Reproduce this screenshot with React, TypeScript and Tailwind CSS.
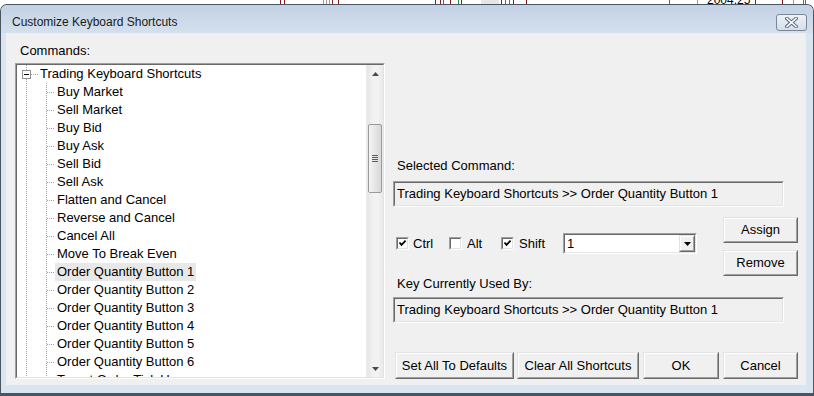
import React from "react";

const vdots =
  "bg-[image:repeating-linear-gradient(to_bottom,#a0a0a0_0px,#a0a0a0_1px,transparent_1px,transparent_2px)]";
const hdots =
  "bg-[image:repeating-linear-gradient(to_right,#a0a0a0_0px,#a0a0a0_1px,transparent_1px,transparent_2px)]";

const children = [
  "Buy Market",
  "Sell Market",
  "Buy Bid",
  "Buy Ask",
  "Sell Bid",
  "Sell Ask",
  "Flatten and Cancel",
  "Reverse and Cancel",
  "Cancel All",
  "Move To Break Even",
  "Order Quantity Button 1",
  "Order Quantity Button 2",
  "Order Quantity Button 3",
  "Order Quantity Button 4",
  "Order Quantity Button 5",
  "Order Quantity Button 6",
  "Target Order Tick Up",
];

function Sunken({
  children,
  className = "",
  inner = "",
}: {
  children?: React.ReactNode;
  className?: string;
  inner?: string;
}) {
  return (
    <div
      className={`border border-t-[#a0a0a0] border-l-[#a0a0a0] border-r-white border-b-white ${className}`}
    >
      <div
        className={`w-full h-full border border-t-[#696969] border-l-[#696969] border-r-[#e3e3e3] border-b-[#e3e3e3] ${inner}`}
      >
        {children}
      </div>
    </div>
  );
}

function Btn({ label, className = "" }: { label: string; className?: string }) {
  return (
    <div
      className={`border border-t-[#e3e3e3] border-l-[#e3e3e3] border-r-[#696969] border-b-[#696969] ${className}`}
    >
      <div className="h-full border border-t-white border-l-white border-r-[#a0a0a0] border-b-[#a0a0a0] bg-[#f0f0f0] flex items-center justify-center text-[13px] text-black">
        {label}
      </div>
    </div>
  );
}

function Check({ checked }: { checked: boolean }) {
  return (
    <div className="w-[13px] h-[13px] border border-t-[#a0a0a0] border-l-[#a0a0a0] border-r-white border-b-white shrink-0">
      <div className="w-full h-full border border-t-[#696969] border-l-[#696969] border-r-[#e3e3e3] border-b-[#e3e3e3] bg-white flex items-center justify-center">
        {checked && (
          <svg width="9" height="9" viewBox="0 0 9 9">
            <path d="M1.5 3.5 L3.5 5.8 L7.6 1.6" stroke="#000" strokeWidth="1.8" fill="none" />
          </svg>
        )}
      </div>
    </div>
  );
}

function ChartStrip() {
  const lines: [number, string][] = [
    [280, "#8b1a1a"],
    [284, "#8b1a1a"],
    [323, "#9a9a9a"],
    [326, "#9a9a9a"],
    [329, "#9a9a9a"],
    [332, "#8b1a1a"],
    [338, "#8b1a1a"],
    [435, "#8b1a1a"],
    [440, "#8b1a1a"],
    [443, "#2e8b2e"],
    [450, "#8b1a1a"],
    [458, "#2e8b2e"],
    [461, "#8b1a1a"],
    [501, "#8b1a1a"],
    [505, "#2e8b2e"],
    [509, "#2e8b2e"],
    [513, "#8b1a1a"],
    [526, "#8b1a1a"],
    [669, "#2e8b2e"],
    [697, "#9a9a9a"],
    [755, "#8b1a1a"],
    [782, "#8b1a1a"],
    [793, "#9a9a9a"],
    [803, "#2e8b2e"],
    [805, "#2e8b2e"],
  ];
  return (
    <svg width="814" height="4" className="block">
      <rect x="0" y="0" width="814" height="4" fill="#ffffff" />
      <rect x="481" y="0" width="18" height="4" fill="#e6e6e6" />
      {lines.map(([x, c], i) => (
        <rect key={i} x={x} y="0" width="1" height="4" fill={c} />
      ))}
      <text x="707" y="4" fontSize="12" fontFamily="Liberation Sans, Arial, sans-serif" fill="#000">
        2004.25
      </text>
    </svg>
  );
}

function Tree() {
  return (
    <div className="flex-1 bg-white overflow-hidden">
      <div className="flex flex-col">
        {/* root */}
        <div className="flex h-[18px]">
          <div className="w-[5px]" />
          <div className="w-[9px] flex flex-col items-center">
            <div className={`w-px flex-1 ${vdots}`} />
            <div className="w-[9px] h-[9px] border border-[#919191] bg-white flex items-center justify-center">
              <div className="w-[5px] h-px bg-black" />
            </div>
            <div className={`w-px flex-1 ${vdots}`} />
          </div>
          <div className="w-[7px] flex items-center">
            <div className={`h-px w-full ${hdots}`} />
          </div>
          <div className="pl-[2px] flex items-center text-[13px] leading-[18px] text-black whitespace-nowrap">
            Trading Keyboard Shortcuts
          </div>
        </div>
        {children.map((c, i) => (
          <div key={i} className="flex h-[18px]">
            <div className="w-[9px]" />
            <div className={`w-px h-full ${vdots}`} />
            <div className="w-[19px]" />
            <div className={`w-px h-full ${vdots}`} />
            <div className="w-[8px] flex items-center">
              <div className={`h-px w-full ${hdots}`} />
            </div>
            <div
              className={`px-[2px] flex items-center text-[13px] leading-[18px] text-black whitespace-nowrap ${
                i === 10 ? "bg-[#e8e8e8]" : ""
              }`}
            >
              {c}
            </div>
          </div>
        ))}
      </div>
    </div>
  );
}

function ScrollBar() {
  return (
    <div className="w-[17px] h-full flex flex-col bg-[linear-gradient(to_right,#e6e6e6,#f2f2f2_40%,#f2f2f2_70%,#e9e9e9)] border-l border-[#ececec]">
      <div className="h-[17px] flex items-center justify-center">
        <svg width="7" height="4" viewBox="0 0 7 4">
          <path d="M0 4 L3.5 0 L7 4 Z" fill="#4a4a4a" />
        </svg>
      </div>
      <div className="h-[42px]" />
      <div className="mx-[1px] h-[69px] rounded-[2px] border border-[#9a9a9a] bg-[linear-gradient(to_right,#f4f4f4,#e6e6e6_50%,#d8d8d8)] flex flex-col items-center justify-center gap-[1px]">
        <div className="w-[6px] h-px bg-[#5e5e5e]" />
        <div className="w-[6px] h-px bg-[#5e5e5e]" />
        <div className="w-[6px] h-px bg-[#5e5e5e]" />
        <div className="w-[6px] h-px bg-[#5e5e5e]" />
      </div>
      <div className="flex-1" />
      <div className="h-[17px] flex items-center justify-center">
        <svg width="7" height="4" viewBox="0 0 7 4">
          <path d="M0 0 L3.5 4 L7 0 Z" fill="#4a4a4a" />
        </svg>
      </div>
    </div>
  );
}

export default function App() {
  return (
    <div className="w-[814px] h-[396px] bg-white overflow-hidden font-['Liberation_Sans',Arial,sans-serif] text-black">
      <ChartStrip />
      <div className="w-[814px] h-[392px] rounded-t-[7px] border-x border-t border-b-[3px] border-[#4a5561] bg-[#d9e5f1] flex flex-col overflow-hidden">
        {/* title bar */}
        <div className="h-[28px] shrink-0 flex items-end justify-between pl-[11px] pr-[6px] bg-linear-to-b from-[#c2d2e4] to-[#d4e0ed]">
          <span className="text-[12px] text-[#1b1b1b] leading-[14px] mb-[4px]">Customize Keyboard Shortcuts</span>
          <div className="w-[31px] h-[17px] mb-[2px] rounded-[3px] border border-[#7a8798] bg-linear-to-b from-[#eef2f7] to-[#d5dee8] flex items-center justify-center">
            <svg width="13" height="11" viewBox="0 0 13 11">
              <path d="M2 1.5 L11 9.5 M11 1.5 L2 9.5" stroke="#5c6a7c" strokeWidth="3.6" strokeLinecap="square" />
              <path d="M2 1.5 L11 9.5 M11 1.5 L2 9.5" stroke="#ffffff" strokeWidth="1.6" strokeLinecap="square" />
            </svg>
          </div>
        </div>
        {/* body */}
        <div className="flex flex-1 min-h-0">
          <div className="w-[5px] shrink-0" />
          <div className="w-[800px] h-[352px] bg-[#f0f0f0] flex pl-[9px] text-[13px]">
            {/* left */}
            <div className="w-[370px] flex flex-col pt-[10px]">
              <div className="pl-[5px] leading-[15px]">Commands:</div>
              <Sunken className="mt-[5px] h-[316px]" inner="flex">
                <Tree />
                <ScrollBar />
              </Sunken>
            </div>
            {/* right */}
            <div className="w-[405px] ml-[8px] flex flex-col pt-[125px]">
              <div className="pl-[4px] leading-[15px]">Selected Command:</div>
              <Sunken className="mt-[8px] w-[391px] h-[26px]" inner="bg-[#f0f0f0] flex items-center pl-[2px]">
                <span className="whitespace-nowrap">Trading Keyboard Shortcuts &gt;&gt; Order Quantity Button 1</span>
              </Sunken>
              <div className="mt-[10px] flex h-[59px]">
                <div className="flex-1 pt-[16px]">
                  <div className="flex items-center h-[21px] pl-[3px]">
                    <div className="w-[53px] flex items-center gap-[4px]">
                      <Check checked />
                      <span>Ctrl</span>
                    </div>
                    <div className="w-[52px] flex items-center gap-[5px]">
                      <Check checked={false} />
                      <span>Alt</span>
                    </div>
                    <div className="w-[62px] flex items-center gap-[5px]">
                      <Check checked />
                      <span>Shift</span>
                    </div>
                    <Sunken className="w-[134px] h-[21px]" inner="bg-white flex items-center">
                      <span className="flex-1 pl-[2px]">1</span>
                      <div className="w-[16px] h-[17px] border border-t-[#e3e3e3] border-l-[#e3e3e3] border-r-[#696969] border-b-[#696969]">
                        <div className="w-full h-full border border-t-white border-l-white border-r-[#a0a0a0] border-b-[#a0a0a0] bg-[#f0f0f0] flex items-center justify-center">
                          <svg width="7" height="4" viewBox="0 0 7 4">
                            <path d="M0 0 L3.5 4 L7 0 Z" fill="#000" />
                          </svg>
                        </div>
                      </div>
                    </Sunken>
                  </div>
                </div>
                <div className="w-[75px] flex flex-col gap-[7px]">
                  <Btn label="Assign" className="h-[26px]" />
                  <Btn label="Remove" className="h-[26px]" />
                </div>
              </div>
              <div className="pl-[4px] leading-[15px]">Key Currently Used By:</div>
              <Sunken className="mt-[6px] w-[391px] h-[26px]" inner="bg-[#f0f0f0] flex items-center pl-[2px]">
                <span className="whitespace-nowrap">Trading Keyboard Shortcuts &gt;&gt; Order Quantity Button 1</span>
              </Sunken>
              <div className="mt-[29px] flex h-[27px]">
                <Btn label="Set All To Defaults" className="ml-[2px] w-[119px]" />
                <Btn label="Clear All Shortcuts" className="ml-[3px] w-[122px]" />
                <Btn label="OK" className="ml-[4px] w-[76px]" />
                <Btn label="Cancel" className="ml-[4px] w-[75px]" />
              </div>
            </div>
          </div>
          <div className="flex-1" />
        </div>
        <div className="h-[8px] shrink-0" />
      </div>
    </div>
  );
}
